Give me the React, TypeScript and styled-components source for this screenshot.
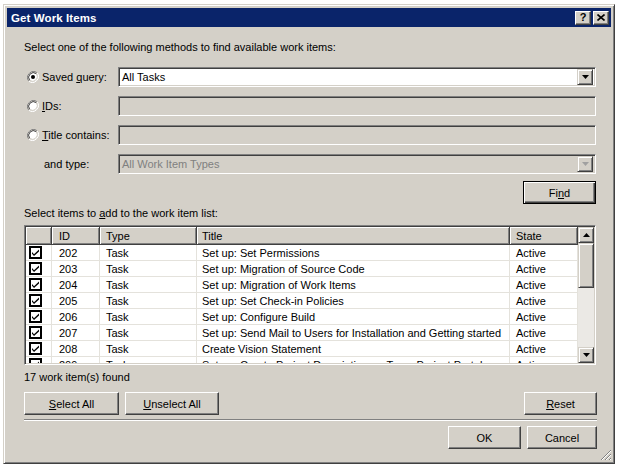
import React from 'react';
import styled, { createGlobalStyle } from 'styled-components';

const Global = createGlobalStyle`
  html, body { margin: 0; padding: 0; background: #fff; }
  body {
    font-family: "Liberation Sans", Arial, sans-serif;
    font-size: 11px;
    color: #000;
  }
  * { box-sizing: border-box; }
`;

const Window = styled.div`
  margin: 4px 0 0 3px;
  width: 612px;
  height: 460px;
  background: #d4d0c8;
  border: 1px solid;
  border-color: #d4d0c8 #404040 #404040 #d4d0c8;
  box-shadow: inset 1px 1px #fff, inset -1px -1px #808080;
  padding: 3px;
  display: flex;
  flex-direction: column;
  position: relative;
`;

const TitleBar = styled.div`
  height: 19px;
  background: #0a246a;
  display: flex;
  align-items: center;
  padding: 0 2px 0 4px;
  gap: 2px;
`;

const TitleText = styled.div`
  flex: 1;
  color: #fff;
  font-weight: bold;
  font-size: 11.5px;
  letter-spacing: 0.1px;
`;

const CaptionButton = styled.div`
  width: 16px;
  height: 14px;
  background: #d4d0c8;
  border: 1px solid;
  border-color: #fff #404040 #404040 #fff;
  box-shadow: inset -1px -1px #808080;
  display: flex;
  align-items: center;
  justify-content: center;
  font-weight: bold;
  font-size: 11px;
  line-height: 1;
`;

const Content = styled.div`
  flex: 1;
  display: flex;
  flex-direction: column;
  padding: 14px 15px 0 17px;
`;

const Text = styled.div<{ $mt?: number }>`
  line-height: 13px;
  height: 13px;
  white-space: nowrap;
  margin-top: ${(p) => p.$mt ?? 0}px;
`;

const Form = styled.div`
  margin-top: 13px;
  display: grid;
  grid-template-columns: 94px 1fr;
  grid-auto-rows: 20px;
  row-gap: 9px;
`;

const OptionLabel = styled.label<{ $indent?: number }>`
  display: flex;
  align-items: center;
  gap: 3px;
  padding-left: ${(p) => p.$indent ?? 3}px;
  white-space: nowrap;
`;

const Field = styled.div<{ $disabled?: boolean }>`
  height: 20px;
  border: 1px solid;
  border-color: #808080 #fff #fff #808080;
  box-shadow: inset 1px 1px #404040, inset -1px -1px #d4d0c8;
  background: ${(p) => (p.$disabled ? '#d4d0c8' : '#fff')};
  color: ${(p) => (p.$disabled ? '#808080' : '#000')};
  display: flex;
  align-items: center;
  padding: 2px;
`;

const FieldText = styled.div`
  flex: 1;
  padding-left: 1px;
  white-space: nowrap;
`;

const ArrowButton = styled.div`
  width: 16px;
  height: 16px;
  background: #d4d0c8;
  border: 1px solid;
  border-color: #d4d0c8 #404040 #404040 #d4d0c8;
  box-shadow: inset 1px 1px #fff, inset -1px -1px #808080;
  display: flex;
  align-items: center;
  justify-content: center;
  flex-shrink: 0;
`;

const Button = styled.div<{ $w: number; $default?: boolean }>`
  width: ${(p) => p.$w}px;
  height: 23px;
  background: #d4d0c8;
  border: 1px solid;
  border-color: ${(p) => (p.$default ? '#000' : '#fff #404040 #404040 #fff')};
  box-shadow: ${(p) =>
    p.$default
      ? 'inset 1px 1px #fff, inset -1px -1px #404040, inset -2px -2px #808080'
      : 'inset -1px -1px #808080'};
  display: flex;
  align-items: center;
  justify-content: center;
  white-space: nowrap;
`;

const FindRow = styled.div`
  display: flex;
  justify-content: flex-end;
  margin-top: 7px;
`;

const List = styled.div`
  margin-top: 5px;
  width: 572px;
  height: 140px;
  border: 1px solid;
  border-color: #808080 #fff #fff #808080;
  box-shadow: inset 1px 1px #404040, inset -1px -1px #d4d0c8;
  background: #fff;
  padding: 1px;
  display: flex;
`;

const Grid = styled.div`
  flex: 1;
  overflow: hidden;
  display: flex;
  flex-direction: column;
`;

const COLS = '26px 48px 97px 313px 68px';

const HeaderRow = styled.div`
  display: grid;
  grid-template-columns: ${COLS};
  height: 18px;
  flex-shrink: 0;
`;

const HeaderCell = styled.div<{ $pl?: number }>`
  background: #d4d0c8;
  border-right: 1px solid #404040;
  border-bottom: 1px solid #404040;
  box-shadow: inset 1px 1px #fff, inset -1px -1px #808080;
  display: flex;
  align-items: center;
  padding-left: ${(p) => p.$pl ?? 6}px;
  white-space: nowrap;
`;

const Row = styled.div`
  display: grid;
  grid-template-columns: ${COLS};
  height: 16px;
  flex-shrink: 0;
`;

const Cell = styled.div<{ $pl?: number }>`
  border-right: 1px solid #e4e2dc;
  border-bottom: 1px solid #e4e2dc;
  display: flex;
  align-items: center;
  padding-left: ${(p) => p.$pl ?? 6}px;
  white-space: nowrap;
  overflow: hidden;
`;

const ScrollBar = styled.div`
  width: 16px;
  display: flex;
  flex-direction: column;
  background: #ebe9e5;
`;

const Thumb = styled.div`
  height: 45px;
  background: #d4d0c8;
  border: 1px solid;
  border-color: #d4d0c8 #404040 #404040 #d4d0c8;
  box-shadow: inset 1px 1px #fff, inset -1px -1px #808080;
`;

const Track = styled.div`
  flex: 1;
`;

const ButtonRow = styled.div<{ $mt: number }>`
  display: flex;
  gap: 6px;
  margin-top: ${(p) => p.$mt}px;
  width: 573px;
`;

const Spacer = styled.div`
  flex: 1;
`;

const Separator = styled.div`
  margin-top: 4px;
  width: 573px;
  height: 2px;
  border-top: 1px solid #808080;
  border-bottom: 1px solid #fff;
`;

const Grip = styled.div`
  position: absolute;
  right: 2px;
  bottom: 2px;
  width: 12px;
  height: 12px;
`;

const U = styled.span`
  text-decoration: underline;
  text-underline-offset: 1px;
`;

function Radio({ checked }: { checked?: boolean }) {
  return (
    <svg width="12" height="12" viewBox="0 0 12 12">
      <path d="M10.2 1.8 A6 6 0 0 0 1.8 10.2" fill="none" stroke="#808080" strokeWidth="1" />
      <path d="M1.8 10.2 A6 6 0 0 0 10.2 1.8" fill="none" stroke="#fff" strokeWidth="1" />
      <circle cx="6" cy="6" r="4.6" fill="#fff" />
      <path d="M9.3 2.7 A4.7 4.7 0 0 0 2.7 9.3" fill="none" stroke="#404040" strokeWidth="1" />
      <path d="M2.7 9.3 A4.7 4.7 0 0 0 9.3 2.7" fill="none" stroke="#d4d0c8" strokeWidth="1" />
      {checked && <circle cx="6" cy="6" r="2" fill="#000" />}
    </svg>
  );
}

function Arrow({ down = true, color = '#000' }: { down?: boolean; color?: string }) {
  return (
    <svg width="7" height="4" viewBox="0 0 7 4">
      <path d={down ? 'M0 0H7L3.5 4Z' : 'M0 4H7L3.5 0Z'} fill={color} />
    </svg>
  );
}

function Check() {
  return (
    <svg width="13" height="13" viewBox="0 0 13 13">
      <rect x="1" y="1" width="11" height="11" fill="#fff" stroke="#000" strokeWidth="2" />
      <path d="M3 6 L5 8.3 L10 3.6 V5.4 L5 10.1 L3 7.8 Z" fill="#000" />
    </svg>
  );
}

const items = [
  ['202', 'Task', 'Set up: Set Permissions', 'Active'],
  ['203', 'Task', 'Set up: Migration of Source Code', 'Active'],
  ['204', 'Task', 'Set up: Migration of Work Items', 'Active'],
  ['205', 'Task', 'Set up: Set Check-in Policies', 'Active'],
  ['206', 'Task', 'Set up: Configure Build', 'Active'],
  ['207', 'Task', 'Set up: Send Mail to Users for Installation and Getting started', 'Active'],
  ['208', 'Task', 'Create Vision Statement', 'Active'],
  ['209', 'Task', 'Set up: Create Project Description on Team Project Portal', 'Active'],
];

export default function App() {
  return (
    <>
      <Global />
      <Window>
        <TitleBar>
          <TitleText>Get Work Items</TitleText>
          <CaptionButton>?</CaptionButton>
          <CaptionButton>
            <svg width="8" height="7" viewBox="0 0 8 7">
              <path d="M0.5 0.5 L7.5 6.5 M7.5 0.5 L0.5 6.5" stroke="#000" strokeWidth="1.6" />
            </svg>
          </CaptionButton>
        </TitleBar>
        <Content>
          <Text>Select one of the following methods to find available work items:</Text>
          <Form>
            <OptionLabel>
              <Radio checked />
              <span>
                Saved <U>q</U>uery:
              </span>
            </OptionLabel>
            <Field>
              <FieldText>All Tasks</FieldText>
              <ArrowButton>
                <Arrow />
              </ArrowButton>
            </Field>
            <OptionLabel>
              <Radio />
              <span>
                <U>I</U>Ds:
              </span>
            </OptionLabel>
            <Field $disabled />
            <OptionLabel>
              <Radio />
              <span>
                <U>T</U>itle contains:
              </span>
            </OptionLabel>
            <Field $disabled />
            <OptionLabel $indent={20}>and type:</OptionLabel>
            <Field $disabled>
              <FieldText>All Work Item Types</FieldText>
              <ArrowButton>
                <Arrow color="#a0a0a0" />
              </ArrowButton>
            </Field>
          </Form>
          <FindRow>
            <Button $w={73} $default>
              Fi<U>n</U>d
            </Button>
          </FindRow>
          <Text $mt={3}>
            Select items to <U>a</U>dd to the work item list:
          </Text>
          <List>
            <Grid>
              <HeaderRow>
                <HeaderCell />
                <HeaderCell $pl={7}>ID</HeaderCell>
                <HeaderCell>Type</HeaderCell>
                <HeaderCell $pl={5}>Title</HeaderCell>
                <HeaderCell>State</HeaderCell>
              </HeaderRow>
              {items.map(([id, type, title, state]) => (
                <Row key={id}>
                  <Cell $pl={3}>
                    <Check />
                  </Cell>
                  <Cell $pl={7}>{id}</Cell>
                  <Cell>{type}</Cell>
                  <Cell $pl={5}>{title}</Cell>
                  <Cell>{state}</Cell>
                </Row>
              ))}
            </Grid>
            <ScrollBar>
              <ArrowButton>
                <Arrow down={false} />
              </ArrowButton>
              <Thumb />
              <Track />
              <ArrowButton>
                <Arrow />
              </ArrowButton>
            </ScrollBar>
          </List>
          <Text $mt={6}>17 work item(s) found</Text>
          <ButtonRow $mt={8}>
            <Button $w={95}>
              <U>S</U>elect All
            </Button>
            <Button $w={94}>
              <U>U</U>nselect All
            </Button>
            <Spacer />
            <Button $w={73}>
              <U>R</U>eset
            </Button>
          </ButtonRow>
          <Separator />
          <ButtonRow $mt={5}>
            <Spacer />
            <Button $w={73}>OK</Button>
            <Button $w={70}>Cancel</Button>
          </ButtonRow>
        </Content>
        <Grip>
          <svg width="12" height="12" viewBox="0 0 12 12">
            <path d="M11 1 L1 11 M11 5 L5 11 M11 9 L9 11" stroke="#808080" strokeWidth="1" />
            <path d="M11 2 L2 11 M11 6 L6 11 M11 10 L10 11" stroke="#fff" strokeWidth="1" />
          </svg>
        </Grip>
      </Window>
    </>
  );
}
